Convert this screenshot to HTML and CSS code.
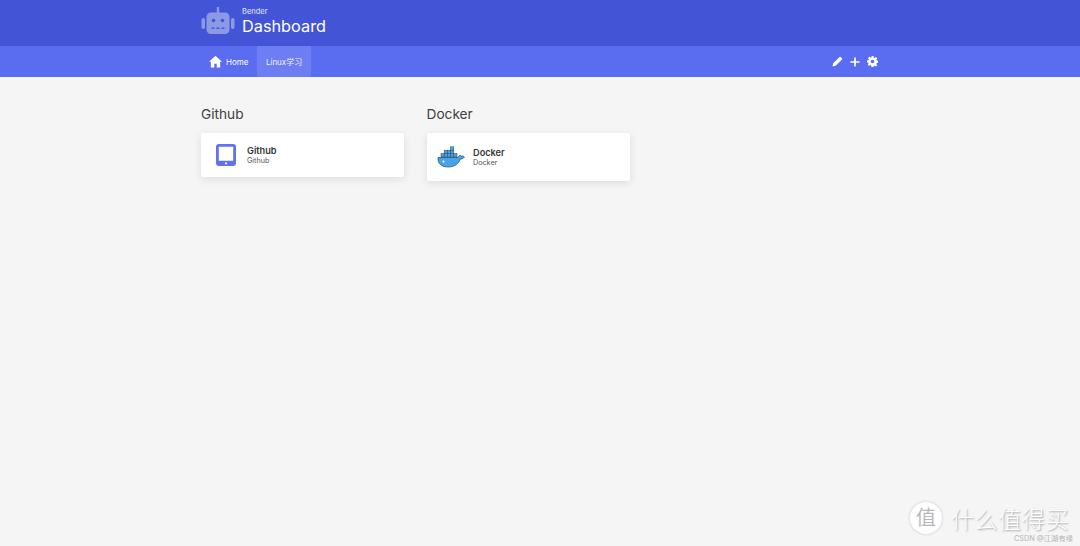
FILE: index.html
```html
<!DOCTYPE html>
<html lang="zh">
<head>
<meta charset="utf-8">
<title>Dashboard</title>
<link rel="stylesheet" href="styles.css">
</head>
<body>
<header class="header">
  <div class="wrap header-in">
    <svg class="logo" viewBox="0 0 34 28" width="34" height="28">
      <rect x="5.500" y="5.500" width="23" height="21.500" rx="4.500" fill="#8c99e6"/>
      <rect x="15.800" y="0" width="2.400" height="6" fill="#8c99e6"/>
      <rect x="0.500" y="11" width="3.500" height="11" rx="1.700" fill="#8c99e6"/>
      <rect x="30" y="11" width="3.500" height="11" rx="1.700" fill="#8c99e6"/>
      <circle cx="12.500" cy="13.500" r="1.800" fill="#4355d6"/>
      <circle cx="21.500" cy="13.500" r="1.800" fill="#4355d6"/>
      <rect x="10.500" y="20.500" width="3" height="1.400" fill="#4355d6"/>
      <rect x="15.500" y="20.500" width="3" height="1.400" fill="#4355d6"/>
      <rect x="20.500" y="20.500" width="3" height="1.400" fill="#4355d6"/>
    </svg>
    <div class="titles">
      <span class="sub">Bender</span>
      <h1 class="title">Dashboard</h1>
    </div>
  </div>
</header>
<nav class="nav">
  <div class="wrap nav-in">
    <div class="nav-left">
      <a class="nav-item">
        <svg class="home" viewBox="0 0 24 24" width="13" height="13"><path d="M12 1.500 0 12.500h3.400V23h6.300v-7h4.600v7h6.300V12.500H24z" fill="#fff"/></svg>
        Home
      </a>
      <a class="nav-item active">Linux学习</a>
    </div>
    <div class="nav-right">
      <svg viewBox="0 0 24 24" width="11" height="11"><path d="M1 23l1.600-7L16 2.600a2.400 2.400 0 0 1 3.400 0l2 2a2.400 2.400 0 0 1 0 3.400L8 21.400z" fill="#fff"/></svg>
      <svg viewBox="0 0 24 24" width="10" height="10"><path d="M10 1h4v9h9v4h-9v9h-4v-9H1v-4h9z" fill="#fff"/></svg>
      <svg viewBox="0 0 24 24" width="11" height="11"><path fill="#fff" fill-rule="evenodd" d="M10 0h4l.7 3.400 2 .8L19.600 2.300l2.800 2.800-1.900 2.900.8 2 3.400.700v4l-3.400.7-.8 2 1.900 2.900-2.800 2.800-2.900-1.900-2 .8L14 24h-4l-.7-3.400-2-.8-2.900 1.900-2.800-2.800 1.900-2.900-.8-2L0 14v-4l3.400-.7.8-2-1.900-2.900 2.800-2.800 2.900 1.900 2-.8zM12 8a4 4 0 1 0 0 8 4 4 0 0 0 0-8z"/></svg>
    </div>
  </div>
</nav>
<main class="wrap columns">
  <section class="column">
    <h2 class="group">Github</h2>
    <div class="card card-github">
      <svg class="tablet" viewBox="0 0 20 22" width="20" height="22">
        <rect x="0" y="0" width="20" height="22" rx="3" fill="#5f72f5"/>
        <rect x="2.800" y="2.800" width="14.400" height="14" rx=".5" fill="#fff"/>
        <circle cx="10" cy="19.400" r="1.100" fill="#fff"/>
      </svg>
      <div>
        <p class="card-title">Github</p>
        <p class="card-sub">Github</p>
      </div>
    </div>
  </section>
  <section class="column">
    <h2 class="group">Docker</h2>
    <div class="card card-docker">
      <svg class="docker" viewBox="0 0 28 22" width="28" height="22">
        <path d="M1 11.500h20c.6-1.700 2-2.400 3-1.500 1.200-.3 2.500 0 3.400 1-1 1.600-2.500 2-4 2-1.600 4.500-6 8-12 8-6.500 0-11-3-10.400-9.500z" fill="#4aa3e6" stroke="#24465f" stroke-width=".7"/>
        <g fill="#4aa3e6" stroke="#24465f" stroke-width=".5">
          <rect x="4" y="7.600" width="3.200" height="3.400"/>
          <rect x="7.200" y="7.600" width="3.200" height="3.400"/>
          <rect x="10.400" y="7.600" width="3.200" height="3.400"/>
          <rect x="13.600" y="7.600" width="3.200" height="3.400"/>
          <rect x="16.800" y="7.600" width="3.200" height="3.400"/>
          <rect x="7.200" y="4.200" width="3.200" height="3.400"/>
          <rect x="10.400" y="4.200" width="3.200" height="3.400"/>
          <rect x="13.600" y="4.200" width="3.200" height="3.400"/>
          <rect x="13.600" y=".8" width="3.200" height="3.400"/>
        </g>
        <circle cx="6.500" cy="15.500" r="1" fill="#fff"/>
      </svg>
      <div>
        <p class="card-title">Docker</p>
        <p class="card-sub">Docker</p>
      </div>
    </div>
  </section>
</main>
<div class="watermark">
  <div class="mark-row">
    <span class="mark-badge">值</span>
    <span class="mark-text">什么值得买</span>
  </div>
  <div class="mark-credit">CSDN @江湖有缘</div>
</div>
</body>
</html>
```

FILE: styles.css
```css
* { box-sizing: border-box; }
html, body { margin: 0; height: 100%; }
body {
  background: #f5f5f5;
  font-family: Inter, "Noto Sans CJK SC", sans-serif;
  color: #363636;
  overflow: hidden;
  position: relative;
}
.wrap { width: 677px; margin-left: 201px; }
.header { height: 46px; background: #4355d6; color: #fff; }
.header-in { display: flex; align-items: flex-start; height: 46px; }
.logo { margin-top: 7px; margin-right: 7px; flex: none; }
.titles { display: flex; flex-direction: column; padding-top: 6px; }
.sub { font-size: 7.500px; line-height: 11px; color: #e4e7fa; }
.title { margin: 0; font-size: 16.300px; font-weight: 400; line-height: 19px; }
.nav { height: 31px; background: #5a6df0; }
.nav-in { display: flex; justify-content: space-between; height: 31px; }
.nav-left { display: flex; }
.nav-item {
  display: flex;
  align-items: center;
  gap: 4px;
  color: #fff;
  font-size: 8px;
  padding: 0 9px 0 8px;
  height: 31px;
}
.nav-item.active { background: #6d7ef2; color: #eef0fd; padding: 0 8.500px; }
.nav-right { display: flex; align-items: center; gap: 7px; }
.columns { display: flex; gap: 22.500px; padding-top: 28px; }
.column { width: 203px; }
.group { margin: 0 0 10px; font-size: 13.700px; font-weight: 400; line-height: 18px; color: #404040; }
.card {
  display: flex;
  align-items: center;
  background: #fff;
  border-radius: 2px;
  box-shadow: 0 2px 8px rgba(0, 0, 0, .1);
  width: 203px;
}
.card-github { height: 44px; padding-left: 15px; gap: 11px; }
.card-docker { height: 48px; padding-left: 10.500px; gap: 8px; }
.card p { margin: 0; }
.card-title { font-size: 9.200px; font-weight: 600; line-height: 11px; color: #363636; }
.card-sub { font-size: 7.200px; line-height: 10px; color: #555; }
.watermark {
  position: absolute;
  right: 7px;
  bottom: 2px;
  display: flex;
  flex-direction: column;
  align-items: flex-end;
}
.mark-row { display: flex; align-items: center; gap: 9px; margin-right: 4px; margin-bottom: -2px; }
.mark-badge {
  width: 32px;
  height: 32px;
  border-radius: 50%;
  background: #fff;
  color: #b8b8b8;
  font-size: 20px;
  line-height: 32px;
  text-align: center;
  box-shadow: 0 0 3px rgba(0, 0, 0, .2);
}
.mark-text {
  font-size: 23px;
  letter-spacing: .6px;
  color: #fff;
  font-weight: 300;
  text-shadow: 1px 1px 2px rgba(0, 0, 0, .35);
}
.mark-credit { font-size: 7.300px; line-height: 11px; color: #b4b4b4; }
```
